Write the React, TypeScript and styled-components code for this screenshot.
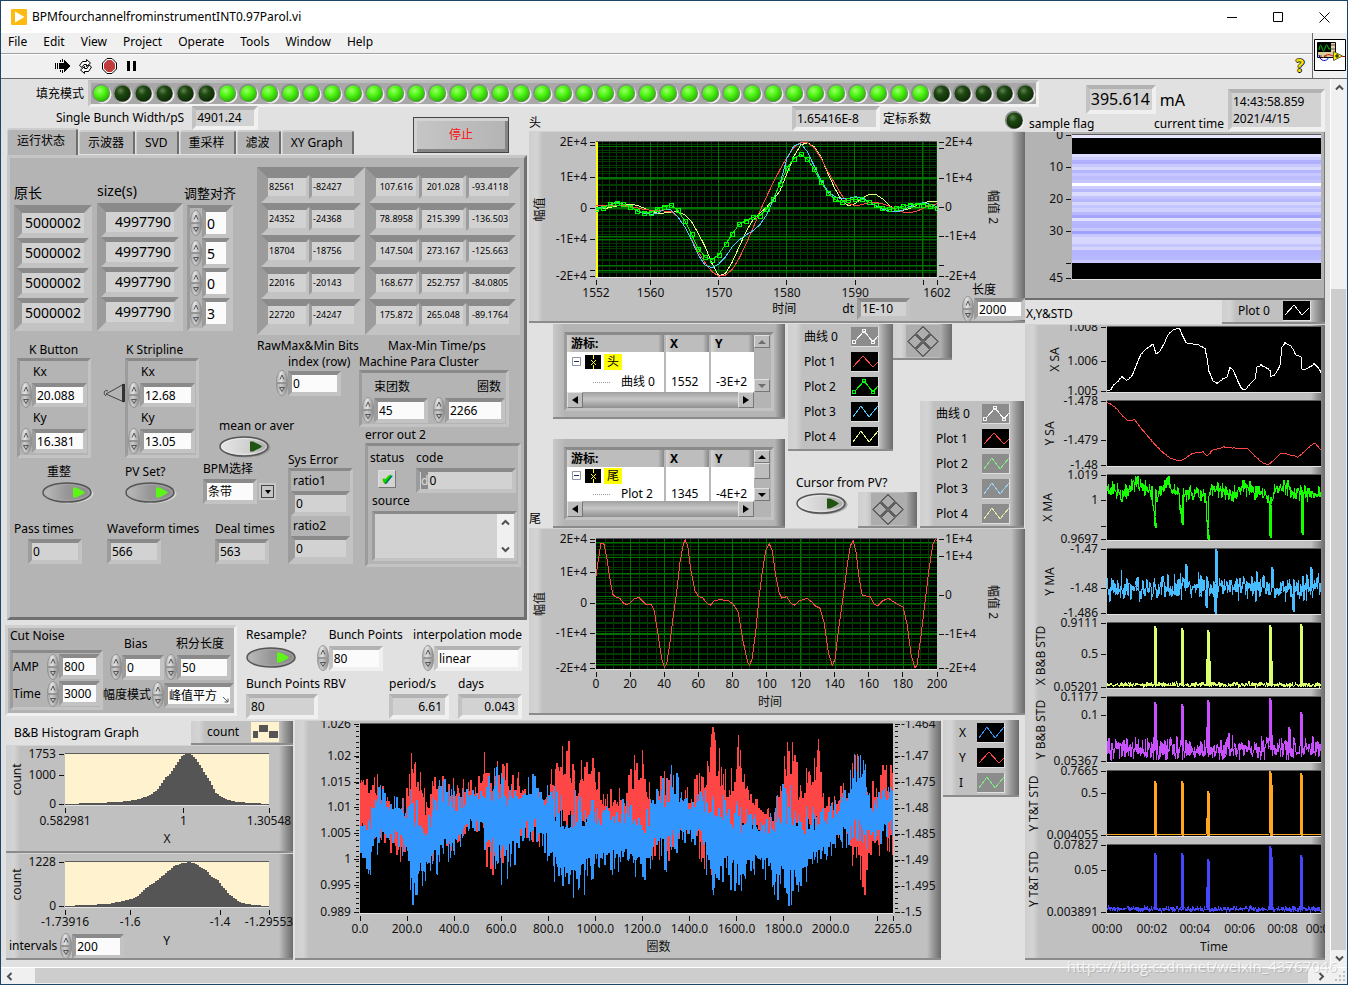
import React from "react";
import styled, { createGlobalStyle, css } from "styled-components";

const Global = createGlobalStyle`
  *, *::before, *::after { box-sizing: border-box; }
  body {
    margin: 0;
    background: #e1e1e1;
    color: #000;
    font: 12px/16px "Noto Sans", "Noto Sans CJK SC", sans-serif;
    overflow-x: hidden;
  }
  button, input, select, textarea { font: inherit; color: inherit; margin: 0; border-radius: 0; }
  button { padding: 0; border: 0; background: none; }
  svg { display: block; }
  svg text { font: 12px "Noto Sans", "Noto Sans CJK SC", sans-serif; fill: #111; }
`;

/* ---------- colours ---------- */

const canvas = "#e1e1e1";
const cluster = "#b4b4b4";
const raised = `linear-gradient(to right, #cfcfcf 0, #d4d4d4 8px, #c0c0c0 14px, #c0c0c0 calc(100% - 14px), #999 calc(100% - 8px), #6c6c6c 100%)`;

const bevels = {
  light: "#b2b2b2 #f0f0f0 #f0f0f0 #c2c2c2",
  dark: "#8a8a8a #c3c3c3 #c3c3c3 #9c9c9c",
};
type Tone = keyof typeof bevels;

/* ---------- window ---------- */

const Window = styled.div`
  position: relative;
  display: flex;
  flex-direction: column;
  min-height: 100vh;
  border: 1px solid #1c4668;
  background: ${canvas};
`;

const TitleBar = styled.header`
  display: flex;
  align-items: center;
  height: 32px;
  padding-left: 10px;
  gap: 5px;
  background: #fff;
`;

const WindowTitle = styled.h1`
  flex: 1;
  margin: 0;
  font-size: 12px;
  font-weight: 400;
`;

const CaptionButtons = styled.div`
  display: flex;
`;

const CaptionButton = styled.button`
  width: 46px;
  height: 30px;
  display: grid;
  place-items: center;
`;

const Bars = styled.div`
  display: flex;
  background: #f0f0f0;
`;

const BarColumn = styled.div`
  flex: 1;
`;

const MenuBar = styled.nav`
  display: flex;
  height: 21px;
  padding: 0 0 3px 7px;
  gap: 16px;
  border-bottom: 1px solid #a0a0a0;
`;

const MenuItem = styled.button`
  line-height: 16px;
`;

const ToolBar = styled.div`
  display: flex;
  align-items: center;
  height: 25px;
  padding: 0 8px 1px 54px;
  gap: 7px;
  border-top: 1px solid #fff;
  border-bottom: 1px solid #6a6a6a;
`;

const HelpButton = styled.button`
  margin-left: auto;
  font: bold 17px/20px "Open Sans", sans-serif;
  color: #f5e400;
  text-shadow: 1px 0 #000, -1px 0 #555, 0 1px #000, 0 -1px #555;
`;

const IconPane = styled.div`
  width: 35px;
  padding: 6px 1px 0;
  border-left: 1px solid #6a6a6a;
  border-bottom: 1px solid #6a6a6a;
`;

const Viewport = styled.div`
  display: flex;
  flex: 1;
`;

const Canvas = styled.main`
  flex: 1;
  min-width: 0;
  display: grid;
  grid-template-columns: minmax(1000px, 1fr) 305px;
  align-items: start;
  padding-bottom: 6px;
`;

/* ---------- scrollbars ---------- */

const VScroll = styled.div`
  display: flex;
  flex-direction: column;
  width: 17px;
  border-left: 1px solid #fff;
  background: #f0f0f0;
`;

const VThumb = styled.div`
  flex: 1;
  margin: 193px 1px 0 0;
  background: #cdcdcd;
`;

const HScroll = styled.div`
  display: flex;
  height: 17px;
  border-top: 1px solid #fff;
  background: #f0f0f0;
`;

const HThumb = styled.div`
  flex: 1;
  margin: 0 5px 1px 17px;
  background: #cdcdcd;
`;

const ArrowButton = styled.button`
  width: 17px;
  height: 17px;
  display: grid;
  place-items: center;
`;

const SizeGrip = styled.div`
  width: 17px;
  display: grid;
  place-items: center end;
  padding-right: 2px;
`;

/* ---------- controls ---------- */

const boxStyle = css<{ $w: number; $h?: number; $tone?: Tone; $size?: number; $b?: number; $right?: boolean }>`
  display: block;
  width: ${(p) => p.$w}px;
  height: ${(p) => p.$h ?? 25}px;
  padding: 0 ${(p) => (p.$right ? 3 : 1)}px;
  border: ${(p) => p.$b ?? 4}px solid;
  border-color: ${(p) => bevels[p.$tone ?? "dark"]};
  font-size: ${(p) => p.$size ?? 12}px;
  line-height: ${(p) => (p.$h ?? 25) - 2 * (p.$b ?? 4)}px;
  text-align: ${(p) => (p.$right ? "right" : "left")};
  white-space: nowrap;
  outline: 0;
`;

const Readout = styled.output`
  ${boxStyle}
  background: #d2d2d2;
`;

const Entry = styled.input`
  ${boxStyle}
  background: #fbfbfb;
`;

const Choice = styled.select`
  ${boxStyle}
  background: #fbfbfb;
  appearance: none;
`;

const RadixMark = styled.span`
  display: inline-block;
  margin-right: 1px;
  background: #8a8a8a;
  color: #ddd;
`;

const SpinBox = styled.span`
  display: flex;
  flex-direction: column;
  width: 12px;
  flex: none;
`;

const NumericRow = styled.span`
  display: flex;
  align-items: center;
`;

const Caption = styled.span<{ $indent?: number }>`
  display: block;
  padding-left: ${(p) => p.$indent ?? 0}px;
  white-space: nowrap;
`;

const ItemBox = styled.label<{ $indent?: number; $gap?: number; $end?: boolean }>`
  display: flex;
  flex-direction: column;
  align-items: ${(p) => (p.$end ? "flex-end" : "flex-start")};
  gap: ${(p) => p.$gap ?? 2}px;
  padding-left: ${(p) => p.$indent ?? 0}px;
`;

const Inset = styled.span<{ $by: number }>`
  display: block;
  padding-left: ${(p) => p.$by}px;
`;

const Cluster = styled.div<{ $w?: number; $b?: number; $tone?: Tone }>`
  width: ${(p) => (p.$w ? `${p.$w}px` : "auto")};
  border: ${(p) => p.$b ?? 3}px solid;
  border-color: ${(p) => bevels[p.$tone ?? "dark"]};
  background: ${cluster};
`;

const ToggleButton = styled.button`
  display: block;
  width: 52px;
  height: 22px;
`;

function Spin() {
  return (
    <SpinBox>
      {[0, 1].map((i) => (
        <button key={i} type="button" aria-label={i ? "Decrease" : "Increase"}>
          <svg width="12" height="13" viewBox="0 0 12 13">
            <defs>
              <linearGradient id="spinUp" x2="1"><stop offset="0" stopColor="#b0b0b0" /><stop offset=".4" stopColor="#e4e4e4" /><stop offset="1" stopColor="#8c8c8c" /></linearGradient>
              <linearGradient id="spinDown" x2="1"><stop offset="0" stopColor="#8c8c8c" /><stop offset=".6" stopColor="#cccccc" /><stop offset="1" stopColor="#a8a8a8" /></linearGradient>
            </defs>
            <g transform={i ? "rotate(180 6 6.500)" : undefined}>
              <path d="M.5 12.500C.5 5.500 3 .5 6 .5s5.500 5 5.500 12z" fill={i ? "url(#spinDown)" : "url(#spinUp)"} stroke="#8a8a8a" strokeWidth=".8" />
            </g>
            {i === 0 ? (
              <path d="M4 9.500L6 5l2 4.500" fill="none" stroke="#555" />
            ) : (
              <path d="M3.500 4.500h5L6 8.500z" fill="none" stroke="#555" />
            )}
          </svg>
        </button>
      ))}
    </SpinBox>
  );
}

type NumericProps = { value: string; w: number; h?: number; tone?: Tone; size?: number; name?: string };

function Numeric({ value, w, h, tone, size, name }: NumericProps) {
  return (
    <NumericRow>
      <Spin />
      <Entry $w={w} $h={h} $tone={tone} $size={size} defaultValue={value} aria-label={name} />
    </NumericRow>
  );
}

type ItemProps = {
  caption: string;
  indent?: number;
  capIndent?: number;
  gap?: number;
  end?: boolean;
  children: React.ReactNode;
};

function Item({ caption, indent, capIndent, gap, end, children }: ItemProps) {
  return (
    <ItemBox $indent={indent} $gap={gap} $end={end}>
      <Caption $indent={capIndent}>{caption}</Caption>
      {children}
    </ItemBox>
  );
}

function Toggle({ on, name }: { on?: boolean; name: string }) {
  return (
    <ToggleButton type="button" role="switch" aria-checked={!!on} aria-label={name}>
      <svg width="52" height="22" viewBox="0 0 52 22">
        <defs>
          <linearGradient id="tgOn" x2="1"><stop offset="0" stopColor="#bdbdbd" /><stop offset=".5" stopColor="#969696" /><stop offset="1" stopColor="#8c8c8c" /></linearGradient>
          <linearGradient id="tgOff" x2="1"><stop offset="0" stopColor="#e6e6e6" /><stop offset=".6" stopColor="#cfcfcf" /><stop offset="1" stopColor="#a6a6a6" /></linearGradient>
        </defs>
        <ellipse cx="26.500" cy="11.500" rx="25" ry="10" fill={on ? "#e2e2e2" : "#8f8f8f"} opacity=".7" />
        <ellipse cx="25" cy="10.500" rx="24" ry="9.500" fill={on ? "url(#tgOn)" : "url(#tgOff)"} stroke="#555" strokeWidth="1.500" />
        <ellipse cx="25" cy="10.500" rx="22" ry="7.800" fill="none" stroke={on ? "#aaa" : "#eee"} opacity=".7" />
        <path d="M31 5.500h3c4 2 7 3 9 5-2 2-5 3-9 5h-3z" fill={on ? "#5cf516" : "#215312"} />
      </svg>
    </ToggleButton>
  );
}

function Led({ on }: { on: boolean }) {
  return (
    <svg width="21" height="21" viewBox="0 0 21 21">
      <defs>
        <radialGradient id="ledOn" cx=".38" cy=".32" r=".7"><stop offset="0" stopColor="#9cff6a" /><stop offset=".45" stopColor="#4df713" /><stop offset="1" stopColor="#2fae0a" /></radialGradient>
        <radialGradient id="ledOff" cx=".38" cy=".32" r=".7"><stop offset="0" stopColor="#5f8350" /><stop offset=".4" stopColor="#1d4710" /><stop offset="1" stopColor="#0f2b08" /></radialGradient>
      </defs>
      <circle cx="11.500" cy="11.500" r="9" fill="#f0f0f0" />
      <circle cx="10" cy="10" r="9.200" fill="#8b8b8b" />
      <circle cx="10.500" cy="10.500" r="8" fill={on ? "url(#ledOn)" : "url(#ledOff)"} />
    </svg>
  );
}

/* ---------- charts ---------- */

type Tick = [number, string?];

const ChartPanel = styled.section<{ $top: number; $h?: number }>`
  min-height: ${(p) => (p.$h ? `${p.$h}px` : "auto")};
  padding-top: ${(p) => p.$top}px;
  border-top: 1px solid #d2d2d2;
  border-bottom: 2px solid #8b8b8b;
  background: ${raised};
  overflow: hidden;
`;

const PlotGrid = styled.div<{ $l: number; $r: number }>`
  display: grid;
  grid-template-columns: ${(p) => p.$l}px minmax(0, 1fr) ${(p) => p.$r}px;
`;

const PlotSvg = styled.svg<{ $h: number; $bg: string }>`
  width: 100%;
  height: ${(p) => p.$h}px;
  background: ${(p) => p.$bg};
  border-top: 1px solid #5c5c5c;
  border-bottom: 1px solid #e4e4e4;
  shape-rendering: crispEdges;
  path, polyline, line { vector-effect: non-scaling-stroke; }
`;

const AxisSvg = styled.svg`
  overflow: visible;
  shape-rendering: crispEdges;
`;

function Plot({ w, h, bg = "#000", children }: { w: number; h: number; bg?: string; children: React.ReactNode }) {
  return (
    <PlotSvg $h={h} $bg={bg} viewBox={`0 0 ${w} ${h - 2}`} preserveAspectRatio="none">
      {children}
    </PlotSvg>
  );
}

type YAxisProps = {
  width: number;
  height: number;
  ticks: Tick[];
  minor?: number[];
  right?: boolean;
  title?: string;
  titleX?: number;
  titleY?: number;
};

function YAxis({ width, height, ticks, minor = [], right, title, titleX = 11, titleY }: YAxisProps) {
  const ty = titleY ?? height / 2;
  const from = right ? 2 : width - 6;
  const to = right ? 7 : width - 1;
  return (
    <AxisSvg width={width} height={height}>
      {minor.map((y, i) => (
        <line key={i} x1={right ? 2 : width - 4} x2={right ? 5 : width - 1} y1={y} y2={y} stroke="#111" />
      ))}
      {ticks.map(([y, label], i) => (
        <React.Fragment key={i}>
          <line x1={from} x2={to} y1={y + 0.5} y2={y + 0.5} stroke="#111" />
          {label && (
            <text x={right ? 8 : width - 9} y={y + 4} textAnchor={right ? "start" : "end"}>{label}</text>
          )}
        </React.Fragment>
      ))}
      {title && (
        <text textAnchor="middle" transform={`translate(${titleX} ${ty}) rotate(${right ? 90 : -90})`} y={4}>{title}</text>
      )}
    </AxisSvg>
  );
}

type XAxisProps = { height: number; ticks: Tick[]; title?: string; titleX?: string; labelY?: number; marks?: boolean };

function XAxis({ height, ticks, title, titleX = "50%", labelY = 20, marks = true }: XAxisProps) {
  return (
    <AxisSvg width="100%" height={height}>
      {ticks.map(([x, label], i) => (
        <React.Fragment key={i}>
          {marks && <line x1={`${x}%`} x2={`${x}%`} y1={2} y2={7} stroke="#111" />}
          {label && <text x={`${x}%`} y={labelY} textAnchor="middle">{label}</text>}
        </React.Fragment>
      ))}
      {title && <text x={titleX} y={labelY + 18} textAnchor="middle">{title}</text>}
    </AxisSvg>
  );
}

function random(seed: number) {
  let s = seed;
  return () => {
    s = (s + 0x6d2b79f5) | 0;
    let t = Math.imul(s ^ (s >>> 15), 1 | s);
    t = (t + Math.imul(t ^ (t >>> 7), 61 | t)) ^ t;
    return ((t ^ (t >>> 14)) >>> 0) / 4294967296;
  };
}

function at(points: number[][], x: number) {
  for (let i = 1; i < points.length; i++) {
    if (x <= points[i][0]) {
      const [x0, y0] = points[i - 1];
      const [x1, y1] = points[i];
      return y0 + ((y1 - y0) * (x - x0)) / (x1 - x0);
    }
  }
  return points[points.length - 1][1];
}

const pairs = (flat: number[]) => {
  const out: number[][] = [];
  for (let i = 0; i < flat.length; i += 2) out.push([flat[i], flat[i + 1]]);
  return out;
};

const line = (points: number[][]) => points.map((p) => p.join(",")).join(" ");

function GreenGrid({ w, h, vMajor, vMinor, hMajor, hMinor }: { w: number; h: number; vMajor: number[]; vMinor: number[]; hMajor: number[]; hMinor: number[] }) {
  return (
    <>
      <path d={vMinor.map((x) => `M${x} 0V${h}`).join("") + hMinor.map((y) => `M0 ${y}H${w}`).join("")} stroke="#003c00" />
      <path d={vMajor.map((x) => `M${x} 0V${h}`).join("") + hMajor.map((y) => `M0 ${y}H${w}`).join("")} stroke="#007200" />
    </>
  );
}

const steps = (from: number, to: number, by: number) => {
  const out: number[] = [];
  for (let v = from; v <= to; v += by) out.push(Math.round(v) + 0.5);
  return out;
};

/* samples 1552 … 1602, in plot rows scaled by three */
const headGreen = [388, 384, 373, 369, 373, 380, 393, 398, 398, 387, 380, 376, 391, 422, 463, 506, 531, 539, 524, 493, 461, 433, 422, 412, 407, 388, 356, 311, 265, 236, 223, 238, 268, 307, 338, 358, 367, 361, 358, 358, 366, 376, 385, 388, 385, 379, 374, 374, 374, 379, 383];
const headYellow = [388, 386, 383, 378, 374, 373, 376, 384, 392, 399, 399, 397, 395, 405, 425, 460, 500, 550, 588, 580, 545, 500, 455, 420, 400, 382, 360, 332, 280, 230, 195, 188, 200, 232, 280, 325, 360, 377, 371, 355, 344, 343, 356, 376, 390, 391, 386, 376, 368, 364, 366];
const headRed = [375, 377, 377, 376, 377, 380, 383, 388, 391, 392, 393, 395, 410, 440, 478, 515, 548, 575, 589, 585, 568, 535, 492, 445, 395, 350, 308, 268, 232, 203, 187, 188, 203, 235, 275, 310, 345, 370, 378, 374, 368, 367, 371, 378, 391, 396, 398, 394, 385, 376, 371];
const headBlue = [385, 382, 374, 367, 372, 381, 392, 400, 403, 400, 388, 390, 410, 440, 480, 525, 555, 564, 552, 530, 500, 480, 465, 452, 435, 405, 360, 310, 235, 198, 190, 215, 258, 300, 335, 350, 356, 355, 350, 355, 365, 378, 387, 393, 396, 390, 380, 372, 368, 373, 380];
const samples = (v: number[]) => v.map((y, i) => [Math.round(i * 68.2) / 10, Math.round(((y - 186) / 3) * 10) / 10]);

function HeadPlot() {
  return (
    <Plot w={341} h={137}>
      <GreenGrid
        w={341} h={137}
        vMajor={[54.5, 122.5, 190.5, 258.5, 326.5]}
        vMinor={steps(6, 341, 6.82)}
        hMinor={[...steps(4, 136, 6.25), ...steps(2, 136, 5.8)]}
        hMajor={[4.5, 36.5, 35.5, 66.5, 65.5, 94.5, 97.5, 123.5, 128.5]}
      />
      <line x1=".5" x2=".5" y1="0" y2="137" stroke="#ffff00" strokeWidth="2" />
      <polyline points={line(samples(headYellow))} fill="none" stroke="#e6ff80" />
      <polyline points={line(samples(headRed))} fill="none" stroke="#ff4646" />
      <polyline points={line(samples(headBlue))} fill="none" stroke="#50c8ff" />
      <polyline points={line(samples(headGreen))} fill="none" stroke="#00ff00" />
      <path
        d={samples(headGreen).map(([x, y]) => `M${Math.round(x) - 1.5} ${Math.round(y) - 1.5}h4v4h-4z`).join("")}
        fill="none" stroke="#00ff00"
      />
    </Plot>
  );
}

const tailCurve = pairs([213,150,222,90,228,52,236,52,245,95,255,160,263,205,270,213,285,218,295,232,306,237,318,230,330,218,342,216,352,225,363,236,380,238,388,255,398,320,410,400,418,425,425,415,435,350,445,270,455,200,465,110,475,55,481,43,488,60,497,130,510,195,520,213,533,216,545,232,556,239,568,225,585,222,610,225,625,236,640,260,655,350,668,410,674,418,681,400,692,320,702,215,712,140,722,75,733,55,742,75,752,150,762,200,770,217,785,213,797,232,808,239,822,226,845,218,860,228,870,240,885,248,897,290,910,380,922,420,930,400,942,300,955,210,968,110,976,60,985,46,993,80,1003,160,1012,210,1035,212,1047,235,1058,240,1072,226,1090,218,1108,230,1135,245,1147,300,1158,385,1170,428,1176,418,1188,330,1200,230,1212,130,1224,55,1231,42,1235,45])
  .map(([x, y]) => [Math.round(((x - 213) / 3) * 10) / 10, Math.round(((y - 40) / 3) * 10) / 10]);

function TailPlot() {
  return (
    <Plot w={341} h={132}>
      <GreenGrid
        w={341} h={132}
        vMajor={steps(34, 340, 34.1)}
        vMinor={steps(8.5, 340, 8.525)}
        hMinor={[...steps(4, 131, 6.1), ...steps(7, 131, 7.7)]}
        hMajor={[3.5, 18.5, 34.5, 57.5, 64.5, 94.5, 95.5, 125.5]}
      />
      <polyline points={line(tailCurve)} fill="none" stroke="#ff4646" />
    </Plot>
  );
}

const redTop = pairs([0,38,10,44,20,52,32,74,45,70,49,24,54,18,61,30,66,72,75,50,79,38,93,42,107,58,117,50,130,8,137,32,154,42,165,56,182,55,195,36,200,22,208,15,215,47,230,10,235,32,245,65,265,58,270,32,282,17,290,62,302,40,308,30,318,60,332,62,342,27,353,0,362,27,368,58,378,10,387,48,398,70,412,82,422,27,432,7,438,50,450,40,458,10,462,58,472,72,485,50,498,17,505,30,515,62,522,40,533,38]);
const redBottom = pairs([0,130,20,120,50,150,75,140,95,135,110,100,122,120,130,174,137,165,148,120,160,115,180,125,200,110,220,130,240,130,255,120,280,152,295,145,310,140,330,115,345,150,352,164,362,135,380,135,400,115,425,140,450,120,465,140,480,110,495,155,505,189,512,150,525,120,533,150]);
const blueTop = pairs([0,80,10,80,15,48,30,68,45,72,51,60,60,72,66,92,79,50,100,66,120,52,133,36,150,45,165,45,180,55,200,65,215,65,235,72,250,78,270,70,285,82,300,55,313,38,325,68,345,62,358,55,375,75,390,85,410,85,425,52,440,76,460,85,475,72,488,50,491,40,493,0,495,30,503,20,510,70,525,62,533,50]);
const blueBottom = pairs([0,152,8,160,15,140,20,130,35,120,45,140,52,190,60,165,70,160,80,150,100,130,110,105,125,128,135,165,150,158,160,130,170,116,180,120,190,145,198,182,213,184,225,170,240,155,260,150,275,156,282,168,295,135,305,150,325,120,340,125,352,178,365,165,378,170,400,150,410,165,425,191,432,184,442,178,450,155,470,135,490,122,505,125,515,125,533,115]);

function bars(top: number[][], bottom: number[][], seed: number) {
  const r = random(seed);
  let d = "";
  let from = 0;
  let to = 0;
  for (let x = 0; x < 533; x++) {
    const a = at(top, x);
    const b = at(bottom, x);
    const reach = (b - a) * 0.34;
    if (x % 2 === 0 || r() > 0.5) {
      from = Math.round(a + (1 - Math.pow(r(), 1.6)) * reach);
      to = Math.round(b - (1 - Math.pow(r(), 1.6)) * reach);
    }
    d += `M${x} ${from}h1V${to}h-1z`;
  }
  return d;
}

const bunchRed = bars(redTop, redBottom, 11);
const bunchBlue = bars(blueTop, blueBottom, 29);

/* strip charts: 214 columns each */
const sa1 = pairs([0,65,3,65,6,59,11,54,15,50,20,53,25,49,29,39,34,27,39,22,46,17,49,27,53,24,57,17,61,8,66,3,72,1,75,7,79,16,89,17,98,21,100,31,102,44,106,54,110,56,116,52,120,50,123,41,126,43,130,52,134,61,138,63,143,57,148,52,150,40,154,38,159,41,163,43,164,50,169,46,173,39,175,20,178,16,184,19,189,28,194,30,195,42,200,42,207,37,211,40,214,45]);
const sa2 = pairs([0,1,8,6,13,12,20,19,28,19,34,27,44,39,54,50,63,57,73,60,79,57,86,52,96,51,100,55,106,49,116,46,129,47,141,48,146,53,153,60,160,64,166,60,174,52,181,53,191,56,196,52,203,45,208,42,214,49]);

function trace(base: number[][], noise: number, seed: number, spikes: number[][] = [], limit = 66) {
  const r = random(seed);
  const out: number[][] = [];
  const step = noise > 1 ? 0.5 : 1;
  for (let x = 0; x <= 214; x += step) {
    const n = (r() + r() + r() - 1.5) / 1.5;
    for (const [sx, sy] of spikes) {
      if (x === sx) {
        out.push([x, sy], [x, at(base, x)], [x + 1, at(base, x)], [x + 1, sy + 2]);
      }
    }
    out.push([x, Math.max(1, Math.min(limit - 3, Math.round((at(base, x) + n * noise) * 2) / 2))]);
  }
  return line(out);
}

const flat = (y: number) => [[0, y], [214, y]];

type Strip = { name: string; x: number; color: string; h: number; ticks: Tick[]; points: string };

const strips: Strip[] = [
  { name: "X SA", x: 30, color: "#ffffff", h: 67, ticks: [[1, "1.008"], [35, "1.006"], [65, "1.005"]], points: trace(sa1, 0.8, 1) },
  { name: "Y SA", x: 25, color: "#ff4646", h: 67, ticks: [[1, "-1.478"], [40, "-1.479"], [65, "-1.48"]], points: trace(sa2, 0.7, 2) },
  { name: "X MA", x: 23, color: "#14ff00", h: 67, ticks: [[1, "1.019"], [26, "1"], [52], [65, "0.9697"]], points: trace(pairs([0,16,8,13,18,20,30,8,45,15,46,28,48,48,49,20,60,10,72,20,74,40,75,20,90,17,99,22,101,60,102,18,110,13,125,20,140,14,160,18,163,30,165,20,175,12,190,18,214,19]), 12, 3, pairs([48,51,75,48,101,64,163,61,195,58])) },
  { name: "Y MA", x: 25, color: "#46beff", h: 67, ticks: [[1, "-1.47"], [40, "-1.48"], [65, "-1.486"]], points: trace(flat(38), 19, 4, pairs([79,15,99,57,108,63,109,0,165,18,186,61,204,18])) },
  { name: "X B&B STD", x: 16, color: "#dcff6e", h: 67, ticks: [[1, "0.9111"], [32, "0.5"], [65, "0.05201"]], points: trace(flat(62), 4, 5, pairs([48,3,75,5,100,36,101,7,102,36,163,2,164,36,194,1])) },
  { name: "Y B&B STD", x: 16, color: "#c850ff", h: 67, ticks: [[1, "0.1177"], [19, "0.1"], [65, "0.05367"]], points: trace(flat(52), 17, 6, pairs([48,5,75,7,100,30,101,3,163,1,164,36,182,30,194,15])) },
  { name: "Y T&T STD", x: 9, color: "#ffa51e", h: 67, ticks: [[1, "0.7665"], [23, "0.5"], [65, "0.004055"]], points: trace(flat(64), 0, 7, pairs([48,10,75,10,100,47,101,20,163,0,164,12,194,2])) },
  { name: "Y T&T STD", x: 9, color: "#4646ff", h: 70, ticks: [[1, "0.07827"], [26, "0.05"], [68, "0.003891"]], points: trace(flat(64), 4, 8, pairs([48,8,75,8,100,42,101,14,163,1,164,10,194,10]), 70) },
];

const hist1 = pairs([0,51,29,50,53,49,70,47,80,44,87,41,94,35,100,25,104,22,111,12,116,4,121,1,126,1,131,6,138,17,145,28,151,40,160,46,172,49,189,50,204,51]);
const hist2 = pairs([0,45,19,44,43,43,63,39,72,36,80,28,87,23,94,18,101,12,109,5,118,2,124,1,130,2,134,5,141,9,146,15,153,19,158,26,165,34,172,39,178,42,189,44,204,45]);

function histogram(points: number[][], base: number) {
  let d = `M0 ${base}`;
  for (let x = 0; x < 204; x += 2) d += `V${Math.round(at(points, x + 1)) - 1}H${x + 2}`;
  return `${d}V${base}z`;
}

const intensityRows = "dcdcff ccccff b0b0ff c8c8ff d8d8ff b4b4ff c8c8ff bebeff c4c4ff ffffff ccccff b8b8ff dcdcff c2c2ff b8b8ff d6d6ff c4c4ff d0d0ff b8b8ff a4a4ff e2e2ff b8b8ff b6b6ff c8c8ff a0a0ff c8c8ff d8d8ff d6d6ff c6c6ff d4d4ff b4b4ff b4b4ff b8b8ff c8c8ff".split(" ");

/* ---------- legends ---------- */

const LegendPanel = styled.div<{ $w: number }>`
  width: ${(p) => p.$w}px;
  flex: none;
  border-bottom: 2px solid #8b8b8b;
  background: ${raised};
`;

const LegendRow = styled.div`
  display: flex;
  align-items: center;
  justify-content: space-between;
  height: 25px;
  padding: 0 14px 0 16px;
`;

type Mark = { label: string; color: string; on?: boolean; squares?: boolean };

function Swatch({ color, on = true, squares, wide }: { color: string; on?: boolean; squares?: boolean; wide?: boolean }) {
  const path = wide ? "M2 14l9-10 8 10 7-7" : squares ? "M4 14l9-10 9 11 5-6" : color === "#ff4646" ? "M2 15l10-11 10 11 5-5" : "M2 15l8-11 8 11 9-11";
  return (
    <svg width="28" height="20" viewBox="0 0 28 20" shapeRendering="crispEdges">
      <rect width="28" height="20" fill={on ? "#000" : "#8c8c8c"} />
      <path d={path} fill="none" stroke={color} />
      {squares && <path d="M1.500 13.500h3v3h-3zM11.500 2.500h3v3h-3zM20.500 13.500h3v3h-3z" fill="none" stroke={color} />}
      <path d="M0 19.500h27.500V0" fill="none" stroke="#e0e0e0" />
    </svg>
  );
}

function Legend({ marks, w }: { marks: Mark[]; w: number }) {
  return (
    <LegendPanel $w={w}>
      {marks.map((m) => (
        <LegendRow key={m.label}>
          <span>{m.label}</span>
          <Swatch color={m.color} on={m.on} squares={m.squares} />
        </LegendRow>
      ))}
    </LegendPanel>
  );
}

const headMarks: Mark[] = [
  { label: "曲线 0", color: "#f4f4f4", on: false, squares: true },
  { label: "Plot 1", color: "#ff4646" },
  { label: "Plot 2", color: "#00ff00", squares: true },
  { label: "Plot 3", color: "#50c8ff" },
  { label: "Plot 4", color: "#e6ff80" },
];
const tailMarks: Mark[] = [
  { label: "曲线 0", color: "#f4f4f4", on: false, squares: true },
  { label: "Plot 1", color: "#ff4646" },
  { label: "Plot 2", color: "#82e682", on: false },
  { label: "Plot 3", color: "#96d2f0", on: false },
  { label: "Plot 4", color: "#dcebaa", on: false },
];
const bunchMarks: Mark[] = [
  { label: "X", color: "#3296ff" },
  { label: "Y", color: "#ff4646" },
  { label: "I", color: "#82e682", on: false },
];

/* ---------- cursor list ---------- */

const CursorPanel = styled.div`
  width: 232px;
  padding: 8px 11px 6px 11px;
  border-bottom: 2px solid #8b8b8b;
  background: linear-gradient(to right, #c8c8c8 0, #b4b4b4 12px, #b4b4b4 calc(100% - 10px), #6c6c6c 100%);
`;

const CursorFrame = styled.div`
  display: grid;
  grid-template-columns: 187px 16px;
  border: 3px solid;
  border-color: ${bevels.dark};
`;

const CursorView = styled.div<{ $h: number }>`
  height: ${(p) => p.$h}px;
  overflow: hidden;
  background: #fff;
`;

const CursorTable = styled.table`
  width: 187px;
  min-height: 100%;
  table-layout: fixed;
  border-collapse: collapse;
  th {
    height: 17px;
    padding: 0 4px;
    text-align: left;
    line-height: 17px;
    background: linear-gradient(to right, #d4d4d4, #bdbdbd 6px, #bdbdbd calc(100% - 6px), #888);
  }
  td {
    height: 18px;
    padding: 0 0 0 5px;
    line-height: 16px;
    white-space: nowrap;
  }
  th + th, td + td { border-left: 2px solid #b8b8b8; }
`;

const TreeCell = styled.span`
  display: flex;
  align-items: center;
  gap: 3px;
`;

const CursorName = styled.mark`
  padding: 0 3px;
  background: #ff0;
`;

const LeafName = styled.span`
  display: block;
  margin-left: 21px;
  padding-left: 28px;
  background: linear-gradient(to right, #999 50%, transparent 50%) 0 8px / 2px 1px repeat-x, linear-gradient(#fff, #fff);
`;

const LeafText = styled.span`
  display: block;
  margin-left: -10px;
  padding-left: 10px;
  background: #fff;
`;

const ScrollSide = styled.div`
  display: flex;
  flex-direction: column;
  justify-content: space-between;
`;

const ScrollFoot = styled.div`
  display: flex;
  height: 16px;
  background: linear-gradient(#a0a0a0, #c6c6c6 45%, #8f8f8f);
`;

const RaisedButton = styled.button<{ $dim?: boolean }>`
  width: 16px;
  height: 13px;
  display: grid;
  place-items: center;
  border: 1px solid;
  border-color: #e0e0e0 #777 #777 #e0e0e0;
  background: #bdbdbd;
  color: ${(p) => (p.$dim ? "#6e6e6e" : "#000")};
`;

const FootButton = styled(RaisedButton)`
  height: 16px;
`;

const SideThumb = styled.div`
  flex: 1;
  margin-bottom: 9px;
  border: 1px solid;
  border-color: #e0e0e0 #777 #777 #e0e0e0;
  background: #bdbdbd;
`;

const FootSpace = styled.div`
  flex: 1;
`;

function Arrow({ d }: { d: string }) {
  return <svg width="8" height="8" viewBox="0 0 8 8"><path d={d} fill="currentColor" /></svg>;
}

function CursorList({ name, plot, x, y, h, active }: { name: string; plot: string; x: string; y: string; h: number; active?: boolean }) {
  return (
    <CursorPanel>
      <CursorFrame>
        <CursorView $h={h}>
          <CursorTable>
            <colgroup><col width="98" /><col width="45" /><col width="44" /></colgroup>
            <thead>
              <tr><th>游标:</th><th>X</th><th>Y</th></tr>
            </thead>
            <tbody>
              <tr>
                <td>
                  <TreeCell>
                    <svg width="10" height="10"><path d="M.5.5h8v8h-8z" fill="#fff" stroke="#8a96a6" /><path d="M2 4.500h5" stroke="#234" /></svg>
                    <svg width="16" height="14" shapeRendering="crispEdges"><path d="M0 0h16v14H0z" /><path d="M8.500 0v4M8.500 10v4M6 5l5 5M11 5l-5 5" stroke="#ff0" /></svg>
                    <CursorName>{name}</CursorName>
                  </TreeCell>
                </td>
                <td /><td />
              </tr>
              <tr><td><LeafName><LeafText>{plot}</LeafText></LeafName></td><td>{x}</td><td>{y}</td></tr>
            </tbody>
          </CursorTable>
        </CursorView>
        <ScrollSide>
          <RaisedButton type="button" aria-label="Up" $dim={!active}><Arrow d="M0 6h8L4 2z" /></RaisedButton>
          {active && <SideThumb />}
          <RaisedButton type="button" aria-label="Down" $dim={!active}><Arrow d="M0 2h8L4 6z" /></RaisedButton>
        </ScrollSide>
        <ScrollFoot>
          <FootButton type="button" aria-label="Left"><Arrow d="M7 0v8L1 4z" /></FootButton>
          <FootSpace />
          <FootButton type="button" aria-label="Right"><Arrow d="M1 0v8l6-4z" /></FootButton>
        </ScrollFoot>
      </CursorFrame>
    </CursorPanel>
  );
}

const MoverButton = styled.button`
  display: grid;
  place-items: center;
  width: 59px;
  height: 36px;
  flex: none;
  border-bottom: 2px solid #8b8b8b;
  background: ${raised};
  color: #111;
`;

function Mover({ name }: { name: string }) {
  return (
    <MoverButton type="button" aria-label={name}>
      <svg width="34" height="32" viewBox="0 0 34 32">
        <rect width="34" height="32" fill="#adadad" />
        <path d="M17 1.500l7 7-7 7-7-7zM9 9.500l7 7-7 7-7-7zM25 9.500l7 7-7 7-7-7zM17 17.500l7 7-7 7-7-7z" fill="none" stroke="#111" />
      </svg>
    </MoverButton>
  );
}

/* ---------- page areas ---------- */

const Area = styled.div`
  min-width: 0;
`;

const LedRow = styled.div`
  display: flex;
  align-items: center;
  gap: 4px;
  height: 28px;
  padding: 1px 0 0 35px;
  white-space: nowrap;
`;

const LedStrip = styled.div`
  display: flex;
  flex: none;
  border: 3px solid;
  border-color: #bebebe #f2f2f2 #f2f2f2 #c4c4c4;
  background: #a8a8a8;
`;

const Columns = styled.div`
  display: flex;
`;

const LeftColumn = styled.div`
  width: 526px;
  flex: none;
`;

const MidColumn = styled.div`
  flex: 1;
  min-width: 0;
  padding-left: 2px;
`;

const LeftHead = styled.div`
  display: flex;
  justify-content: space-between;
  align-items: flex-end;
  height: 48px;
  padding: 0 18px 0 6px;
`;

const BunchWidth = styled.label`
  display: flex;
  align-items: center;
  gap: 8px;
  height: 22px;
  padding-left: 49px;
`;

const Tabs = styled.div`
  display: flex;
  align-items: flex-end;
  gap: 1px;
  height: 26px;
`;

const Tab = styled.button<{ $active?: boolean }>`
  height: ${(p) => (p.$active ? 27 : 24)}px;
  margin-bottom: ${(p) => (p.$active ? 0 : 1)}px;
  padding: ${(p) => (p.$active ? "0 11px 3px 9px" : "0 9px 0 8px")};
  border: solid;
  border-width: 2px 2px 0 1px;
  border-color: #cdcdcd #6e6e6e #6e6e6e #cdcdcd;
  border-radius: 3px 3px 0 0;
  background: ${cluster};
  white-space: nowrap;
`;

const StopButton = styled.button`
  width: 96px;
  height: 36px;
  margin-bottom: 2px;
  border: 1px solid #444;
  box-shadow: inset 3px 3px 0 #d2d2d2, inset -3px -3px 0 #858585;
  background: linear-gradient(to right, #c6c6c6, #b4b4b4);
  color: #ff0e0e;
`;

const TabPanel = styled.section`
  height: 465px;
  margin-left: 6px;
  padding: 10px 0 0 4px;
  border: 3px solid;
  border-color: #c6c6c6 #707070 #707070 #c6c6c6;
  background: ${cluster};
`;

const UpperRow = styled.div`
  display: flex;
  align-items: flex-end;
  height: 167px;
`;

const ArrayItem = styled.div<{ $w: number }>`
  width: ${(p) => p.$w}px;
  flex: none;
  padding-bottom: 4px;
`;

const ArrayTitle = styled.h2<{ $size: number }>`
  margin: 0;
  font-size: ${(p) => p.$size}px;
  font-weight: 400;
  line-height: 24px;
  white-space: nowrap;
`;

const Matrix = styled.table`
  border-spacing: 0;
  border: 4px solid;
  border-color: ${bevels.dark};
  font-size: 9px;
  tbody { display: block; }
  tr {
    display: flex;
    border: 4px solid;
    border-color: ${bevels.dark};
  }
  td { display: block; padding: 0; }
`;

const LowerRow = styled.div`
  display: flex;
  height: 229px;
`;

const GainGrid = styled.div`
  display: grid;
  grid-template-columns: 84px 105px 54px;
  grid-template-rows: 123px 46px 60px;
  align-items: end;
  flex: none;
`;

const GainCluster = styled(Cluster)`
  padding: 1px 0;
`;

const GainCaption = styled(Caption)`
  line-height: 20px;
`;

const PointerRow = styled.div<{ $indent: number }>`
  display: flex;
  align-items: center;
  padding-left: ${(p) => p.$indent}px;
`;

const PointerMark = styled.svg`
  align-self: flex-start;
  margin-top: 24px;
`;

const BarRow = styled.span`
  display: flex;
  align-items: center;
  gap: 2px;
`;

const DropButton = styled.button`
  display: grid;
  place-items: center;
  width: 17px;
  height: 17px;
  border: 2px solid #c8c8c8;
  outline: 1px solid #444;
  outline-offset: -3px;
  background: #c6c6c6;
`;

const SideStack = styled.div<{ $w: number }>`
  display: flex;
  flex-direction: column;
  justify-content: space-between;
  width: ${(p) => p.$w}px;
  padding-top: 3px;
`;

const RowIndex = styled.label`
  display: flex;
  flex-direction: column;
`;

const ErrorGroup = styled.div<{ $indent: number }>`
  padding-left: ${(p) => p.$indent}px;
`;

const ErrorCluster = styled(Cluster)`
  padding: 4px 2px 3px 2px;
`;

const ErrorTop = styled.div`
  display: flex;
  justify-content: space-between;
`;

const MachineCluster = styled(Cluster)`
  display: flex;
  justify-content: space-between;
  padding: 6px 1px 1px 0;
`;

const StatusTick = styled.input`
  display: grid;
  place-items: center;
  width: 18px;
  height: 18px;
  margin: 2px 0 0 8px;
  appearance: none;
  border: 1px solid;
  border-color: #ddd #777 #777 #ddd;
  background: #d4d4d4;
  &:checked::after {
    content: "✔";
    font: 15px/15px "DejaVu Sans", sans-serif;
    color: #00d800;
    text-shadow: 1px 1px #063;
  }
`;

const SourceBox = styled.div`
  display: flex;
  width: 145px;
  height: 50px;
  border: 3px solid;
  border-color: ${bevels.dark};
  background: #d2d2d2;
`;

const SourceText = styled.textarea`
  flex: 1;
  min-width: 0;
  resize: none;
  border: 0;
  background: none;
`;

const SourceScroll = styled.div`
  display: flex;
  flex-direction: column;
  justify-content: space-between;
  width: 17px;
  background: #f0f0f0;
`;

const SettingsRow = styled.div`
  display: flex;
  padding: 5px 5px 0 4px;
`;

const NoiseCluster = styled(Cluster)`
  display: flex;
  height: 91px;
  border-color: #cfcfcf #f0f0f0 #f0f0f0 #cfcfcf;
  background: #b2b2b2;
`;

const NoiseInner = styled(Cluster)`
  margin: 6px 0 0 2px;
`;

const NoiseRow = styled.label`
  display: flex;
  align-items: center;
  justify-content: space-between;
  height: 27px;
`;

const NoiseSide = styled.div`
  display: flex;
  flex-direction: column;
  justify-content: space-between;
  flex: 1;
  padding: 8px 0 5px;
`;

const NoiseTop = styled.div`
  display: flex;
  justify-content: space-between;
  padding: 0 3px 0 7px;
`;

const ModeRow = styled.label`
  display: flex;
  align-items: center;
  justify-content: space-between;
  white-space: nowrap;
`;

const RingBox = styled.span`
  position: relative;
  display: block;
  svg { position: absolute; right: 5px; bottom: 5px; pointer-events: none; }
`;

const ResampleGroup = styled.div`
  flex: 1;
  display: flex;
  flex-direction: column;
  gap: 5px;
  padding: 2px 0 0 9px;
`;

const ResampleRow = styled.div`
  display: flex;
  justify-content: space-between;
`;

const PeriodPair = styled.div`
  display: flex;
  gap: 9px;
`;

const MidHead = styled.div`
  display: flex;
  align-items: flex-end;
  justify-content: space-between;
  height: 24px;
  white-space: nowrap;
`;

const ScaleGroup = styled.label`
  display: flex;
  align-items: center;
  gap: 3px;
  flex: 1;
  justify-content: flex-end;
  padding-right: 73px;
`;

const HeadFoot = styled.div`
  display: flex;
  justify-content: flex-end;
  align-items: center;
  height: 22px;
`;

const HeadFootTitle = styled.span`
  margin-right: 46px;
`;

const DtField = styled.label`
  display: flex;
  align-items: center;
  gap: 3px;
  margin-right: 52px;
`;

const LengthLabel = styled.span`
  padding: 4px 0 0 35px;
`;

const Tools = styled.div`
  display: grid;
  grid-template-columns: 24px 232px 3px 132px 1fr;
  height: 205px;
`;

const TailTitle = styled.span`
  align-self: end;
  padding-bottom: 1px;
`;

const ToolColumn = styled.div`
  display: flex;
  flex-direction: column;
  justify-content: space-between;
  padding-top: 1px;
`;

const PaletteRow = styled.div`
  display: flex;
  align-items: flex-end;
  justify-content: space-between;
  padding: 0 3px 0 8px;
`;

const CursorToggle = styled.div`
  width: 60px;
  white-space: nowrap;
  margin-bottom: 13px;
`;

const PaletteColumn = styled(ToolColumn)`
  align-items: flex-start;
  margin-left: -27px;
`;

const TailLegendHolder = styled.div`
  padding-left: 27px;
`;

const BottomRow = styled.div`
  display: flex;
  align-items: flex-start;
  gap: 2px;
  padding: 1px 6px 0 5px;
`;

const HistogramColumn = styled.div`
  width: 287px;
  flex: none;
`;

const HistogramHead = styled.div`
  display: flex;
  justify-content: space-between;
  align-items: flex-end;
  height: 25px;
  padding-left: 8px;
  line-height: 24px;
`;

const CountLegend = styled(LegendPanel)`
  display: flex;
  justify-content: space-between;
  align-items: center;
  height: 24px;
  padding: 0 14px 0 16px;
`;

const IntervalsRow = styled.div`
  display: flex;
  align-items: flex-start;
  gap: 39px;
  height: 25px;
  margin-top: 2px;
  padding-left: 3px;
`;

const IntervalsLabel = styled.label`
  display: flex;
  align-items: center;
  gap: 3px;
`;

const BunchPanel = styled(ChartPanel)`
  flex: 1;
  min-width: 0;
`;

const RightColumn = styled.div`
  padding-right: 5px;
`;

const RightHead = styled.div`
  display: flex;
  justify-content: space-between;
  height: 53px;
  padding-left: 4px;
`;

const CurrentBlock = styled.div`
  display: flex;
  flex-direction: column;
  justify-content: space-between;
  align-items: flex-end;
  flex: 1;
  padding-top: 6px;
`;

const CurrentRow = styled.label`
  display: flex;
  align-items: center;
  gap: 4px;
  margin-right: 43px;
  font-size: 16px;
`;

const FlagRow = styled.div`
  display: flex;
  justify-content: space-between;
  width: 100%;
  padding-right: 4px;
`;

const Clock = styled.output`
  width: 97px;
  height: 42px;
  margin-top: 10px;
  padding: 0 1px;
  border: 4px solid;
  border-color: ${bevels.light};
  background: #d2d2d2;
  line-height: 17px;
`;

const IntensityPanel = styled.section`
  height: 168px;
  padding-top: 2px;
  border-right: 1px solid #777;
  border-bottom: 2px solid #6e6e6e;
  background: #b3b3b3;
  overflow: hidden;
`;

const StripHead = styled.div`
  display: flex;
  justify-content: space-between;
  align-items: flex-end;
  height: 24px;
  padding-left: 1px;
  line-height: 20px;
`;

const StripRow = styled.div`
  margin-bottom: 7px;
`;

const Watermark = styled.div`
  position: absolute;
  right: 10px;
  bottom: 8px;
  font: 15px/20px "Open Sans", sans-serif;
  color: rgba(255, 255, 255, 0.75);
  text-shadow: 1px 1px rgba(130, 130, 130, 0.35);
  pointer-events: none;
`;

/* ---------- data ---------- */

const leds = Array.from({ length: 45 }, (_, i) => i === 0 || (i > 5 && i < 40));
const bits = [["82561", "-82427"], ["24352", "-24368"], ["18704", "-18756"], ["22016", "-20143"], ["22720", "-24247"]];
const times = [["107.616", "201.028", "-93.4118"], ["78.8958", "215.399", "-136.503"], ["147.504", "273.167", "-125.663"], ["168.677", "252.757", "-84.0805"], ["175.872", "265.048", "-89.1764"]];
const timeWidths = [46, 47, 46];

const bunchX: Tick[] = [
  ...Array.from({ length: 11 }, (_, i): Tick => [(i * 20000) / 2265, `${i * 200}.0`]),
  [(2200 * 100) / 2265],
  [100, "2265.0"],
];
const bunchMinor = steps(3, 190, 5.2);

function Chevron({ d }: { d: string }) {
  return (
    <svg width="9" height="9" viewBox="0 0 9 9">
      <path d={d} fill="none" stroke="#505050" strokeWidth="2" />
    </svg>
  );
}

const up = "M1 6.500l3.500-3.500L8 6.500";
const down = "M1 2.500l3.500 3.500L8 2.500";
const left = "M6.500 1L3 4.500 6.500 8";
const rightArrow = "M2.500 1L6 4.500 2.500 8";

function GainPair({ x, y }: { x: string; y: string }) {
  return (
    <GainCluster $w={74}>
      <label>
        <GainCaption $indent={13}>Kx</GainCaption>
        <Numeric value={x} w={55} h={24} />
      </label>
      <label>
        <GainCaption $indent={13}>Ky</GainCaption>
        <Numeric value={y} w={55} h={24} />
      </label>
    </GainCluster>
  );
}

function StatusTab() {
  return (
    <TabPanel>
      <UpperRow>
        <ArrayItem $w={83}>
          <ArrayTitle $size={14}>原长</ArrayTitle>
          <Cluster $w={78}>
            {[0, 1, 2, 3].map((i) => <Readout key={i} $w={72} $h={30} $b={5} $size={14} $right>5000002</Readout>)}
          </Cluster>
        </ArrayItem>
        <ArrayItem $w={87}>
          <ArrayTitle $size={14}>size(s)</ArrayTitle>
          <Cluster $w={86} $b={4}>
            {[0, 1, 2, 3].map((i) => <Readout key={i} $w={78} $h={30} $b={5} $size={14} $right>4997790</Readout>)}
          </Cluster>
        </ArrayItem>
        <ArrayItem $w={73}>
          <ArrayTitle $size={13}>调整对齐</ArrayTitle>
          <Inset $by={3}>
            <Cluster $w={46}>
              {["0", "5", "0", "3"].map((v, i) => <Numeric key={i} value={v} w={28} h={30} size={14} name={`调整对齐 ${i}`} />)}
            </Cluster>
          </Inset>
        </ArrayItem>
        <Matrix>
          <tbody>
            {bits.map((row) => (
              <tr key={row[0]}>
                {row.map((v, i) => <td key={v}><Readout $w={i ? 48 : 44} $h={24} $size={9} $b={3}>{v}</Readout></td>)}
              </tr>
            ))}
          </tbody>
        </Matrix>
        <Matrix>
          <tbody>
            {times.map((row) => (
              <tr key={row[0]}>
                {row.map((v, i) => <td key={v}><Readout $w={timeWidths[i]} $h={24} $size={9} $b={3} $right>{v}</Readout></td>)}
              </tr>
            ))}
          </tbody>
        </Matrix>
      </UpperRow>

      <LowerRow>
        <GainGrid>
          <div>
            <Caption $indent={15}>K Button</Caption>
            <PointerRow $indent={3}><GainPair x="20.088" y="16.381" /></PointerRow>
          </div>
          <div>
            <Caption $indent={28}>K Stripline</Caption>
            <PointerRow $indent={5}>
              <PointerMark width="22" height="22" viewBox="0 0 22 22">
                <path d="M3 14c-3-2-2-7 2-5M21 2v18L3 12 21 2" fill="none" stroke="#444" />
                <path d="M20.500 2v18" stroke="#333" strokeWidth="3" />
              </PointerMark>
              <GainPair x="12.68" y="13.05" />
            </PointerRow>
          </div>
          <Item caption="mean or aver" indent={16}><Toggle name="mean or aver" /></Item>
          <Item caption="重整" indent={28} capIndent={5}><Toggle on name="重整" /></Item>
          <Item caption="PV Set?" indent={27}><Toggle on name="PV Set?" /></Item>
          <Item caption="BPM选择">
            <BarRow>
              <Choice $w={54} defaultValue="条带"><option>条带</option></Choice>
              <DropButton type="button" aria-label="Open list"><Arrow d="M1 2h6L4 6z" /></DropButton>
            </BarRow>
          </Item>
          <Item caption="Pass times"><Inset $by={14}><Readout $w={54}>0</Readout></Inset></Item>
          <Item caption="Waveform times" indent={9}><Readout $w={54}>566</Readout></Item>
          <Item caption="Deal times" indent={12}><Readout $w={54}>563</Readout></Item>
        </GainGrid>

        <SideStack $w={102}>
          <RowIndex>
            <Caption>RawMax&amp;Min Bits</Caption>
            <Caption $indent={31}>index (row)</Caption>
            <Inset $by={19}><Numeric value="0" w={53} /></Inset>
          </RowIndex>
          <ErrorGroup $indent={31}>
            <Caption>Sys Error</Caption>
            <Cluster $w={65}>
              <label><GainCaption $indent={2}>ratio1</GainCaption><Readout $w={59}>0</Readout></label>
              <label><GainCaption $indent={2}>ratio2</GainCaption><Readout $w={59}>0</Readout></label>
            </Cluster>
          </ErrorGroup>
        </SideStack>

        <SideStack $w={162}>
          <div>
            <Caption $indent={29}>Max-Min Time/ps</Caption>
            <Caption>Machine Para Cluster</Caption>
            <MachineCluster $w={150}>
              <Item caption="束团数" capIndent={12}><Numeric value="45" w={54} /></Item>
              <Item caption="圈数" capIndent={44}><Numeric value="2266" w={60} /></Item>
            </MachineCluster>
          </div>
          <ErrorGroup $indent={6}>
            <Caption>error out 2</Caption>
            <ErrorCluster $w={156}>
              <ErrorTop>
                <Item caption="status"><StatusTick type="checkbox" defaultChecked /></Item>
                <Item caption="code"><Readout $w={100}><RadixMark>d</RadixMark>0</Readout></Item>
              </ErrorTop>
              <Item caption="source" indent={2}>
                <SourceBox>
                  <SourceText readOnly />
                  <SourceScroll>
                    <ArrowButton type="button" aria-label="Scroll up"><Chevron d={up} /></ArrowButton>
                    <ArrowButton type="button" aria-label="Scroll down"><Chevron d={down} /></ArrowButton>
                  </SourceScroll>
                </SourceBox>
              </Item>
            </ErrorCluster>
          </ErrorGroup>
        </SideStack>
      </LowerRow>
    </TabPanel>
  );
}

function Settings() {
  return (
    <SettingsRow>
      <NoiseCluster $w={232}>
        <div>
          <Caption $indent={2}>Cut Noise</Caption>
          <NoiseInner $w={93}>
            <NoiseRow>AMP<Numeric value="800" w={41} /></NoiseRow>
            <NoiseRow>Time<Numeric value="3000" w={41} /></NoiseRow>
          </NoiseInner>
        </div>
        <NoiseSide>
          <NoiseTop>
            <Item caption="Bias" capIndent={14}><Numeric value="0" w={42} /></Item>
            <Item caption="积分长度" capIndent={11}><Numeric value="50" w={54} /></Item>
          </NoiseTop>
          <ModeRow>
            幅度模式
            <NumericRow>
              <Spin />
              <RingBox>
                <Choice $w={70} defaultValue="峰值平方"><option>峰值平方</option></Choice>
                <svg width="6" height="6"><path d="M0 0l5 5M5 1.500V5H1.500" fill="none" stroke="#555" /></svg>
              </RingBox>
            </NumericRow>
          </ModeRow>
        </NoiseSide>
      </NoiseCluster>
      <ResampleGroup>
        <ResampleRow>
          <Item caption="Resample?" gap={4}><Toggle on name="Resample?" /></Item>
          <Item caption="Bunch Points" capIndent={12}><Numeric value="80" w={54} tone="light" /></Item>
          <Item caption="interpolation mode" end>
            <NumericRow>
              <Spin />
              <Choice $w={88} $tone="light" defaultValue="linear"><option>linear</option></Choice>
            </NumericRow>
          </Item>
        </ResampleRow>
        <ResampleRow>
          <Item caption="Bunch Points RBV"><Readout $w={72} $tone="light">80</Readout></Item>
          <PeriodPair>
            <Item caption="period/s"><Readout $w={60} $tone="light" $right>6.61</Readout></Item>
            <Item caption="days"><Readout $w={64} $tone="light" $right>0.043</Readout></Item>
          </PeriodPair>
        </ResampleRow>
      </ResampleGroup>
    </SettingsRow>
  );
}

export default function App() {
  return (
    <>
      <Global />
      <Window>
        <TitleBar>
          <svg width="16" height="16" viewBox="0 0 16 16"><rect width="16" height="16" rx="1" fill="#fdbb12" /><path d="M4 2.500v11L13.500 8z" fill="#fff" /></svg>
          <WindowTitle>BPMfourchannelfrominstrumentINT0.97Parol.vi</WindowTitle>
          <CaptionButtons>
            <CaptionButton aria-label="Minimize"><svg width="10" height="10"><path d="M0 5.500h10" stroke="#000" /></svg></CaptionButton>
            <CaptionButton aria-label="Maximize"><svg width="10" height="10"><path d="M.5.5h9v9h-9z" fill="none" stroke="#000" /></svg></CaptionButton>
            <CaptionButton aria-label="Close"><svg width="11" height="11"><path d="M.5.5l10 10M10.500.5l-10 10" stroke="#000" /></svg></CaptionButton>
          </CaptionButtons>
        </TitleBar>

        <Bars>
          <BarColumn>
            <MenuBar>
              {["File", "Edit", "View", "Project", "Operate", "Tools", "Window", "Help"].map((m) => <MenuItem key={m} type="button">{m}</MenuItem>)}
            </MenuBar>
            <ToolBar>
              <button type="button" aria-label="Run"><svg width="16" height="14" viewBox="0 0 16 14" shapeRendering="crispEdges"><path d="M4 4h5V1l6 6-6 6v-3H4zM0 4h1v6H0zM2 4h1v6H2zM5 1h1v2H5zM7 0h1v3H7zM5 11h1v2H5zM7 11h1v3H7z" /></svg></button>
              <button type="button" aria-label="Run continuously"><svg width="15" height="15" viewBox="0 0 15 15"><path d="M1.500 6.500l3-4h4V.5l4 3.500-4 3.500v-2h-2.500L4 8.500zM13.500 8l-3 4.500h-4v2L2.500 11l4-3.500v2H9L11 6z" fill="#fff" stroke="#000" /></svg></button>
              <button type="button" aria-label="Abort"><svg width="20" height="16" viewBox="-2 0 20 16"><path d="M5 .5h5l4.500 4.500v6L10 15.500H5L.5 11V5z" fill="#fff" stroke="#000" /><path d="M5.500 2h4l3.500 3.500v5L9.500 14h-4L2 10.500v-5z" fill="#c03c3c" /></svg></button>
              <button type="button" aria-label="Pause"><svg width="10" height="10" viewBox="0 0 10 10"><path d="M0 0h3v10H0zM6 0h3v10H6z" /></svg></button>
              <HelpButton type="button" aria-label="Help">?</HelpButton>
            </ToolBar>
          </BarColumn>
          <IconPane>
            <svg width="32" height="32" viewBox="0 0 32 32">
              <path d="M.5.5h31v31H.5z" fill="#fff" stroke="#000" />
              <path d="M3.500 3.500h18v15h-18z" fill="#d8cf9a" stroke="#000" />
              <path d="M4 4h13v9H4z" />
              <path d="M5 11c1-6 2-6 3-2s2 4 3 0 2-4 3-1 1 3 2 1" fill="none" stroke="#0c0" />
              <path d="M18 5v2M20 5v2M18 9v2M20 9v2M5 17h3M10 17h3" stroke="#644" />
              <path d="M5 16c1 7 8 7 10 2" fill="none" stroke="#00c" />
              <path d="M9 19c3-4 6-4 10-2M28 17.500h3" fill="none" stroke="#d00" />
              <path d="M19.500 12.500v9l9-4.500z" fill="#ffee00" stroke="#664" /><path d="M21 17h4M23 15v4" stroke="#000" />
            </svg>
          </IconPane>
        </Bars>

        <Viewport>
          <Canvas>
            <Area>
              <LedRow>
                填充模式
                <LedStrip>{leds.map((on, i) => <Led key={i} on={on} />)}</LedStrip>
              </LedRow>

              <Columns>
                <LeftColumn>
                  <LeftHead>
                    <div>
                      <BunchWidth>Single Bunch Width/pS<Readout $w={66} $h={24} $tone="light">4901.24</Readout></BunchWidth>
                      <Tabs role="tablist">
                        <Tab role="tab" aria-selected $active>运行状态</Tab>
                        <Tab role="tab">示波器</Tab>
                        <Tab role="tab">SVD</Tab>
                        <Tab role="tab">重采样</Tab>
                        <Tab role="tab">滤波</Tab>
                        <Tab role="tab">XY Graph</Tab>
                      </Tabs>
                    </div>
                    <StopButton type="button">停止</StopButton>
                  </LeftHead>
                  <StatusTab />
                  <Settings />
                </LeftColumn>

                <MidColumn>
                  <MidHead>
                    头
                    <ScaleGroup><Readout $w={88} $tone="light">1.65416E-8</Readout>定标系数</ScaleGroup>
                    <Led on={false} />
                  </MidHead>

                  <ChartPanel $top={9} $h={192}>
                    <PlotGrid $l={67} $r={88}>
                      <YAxis width={67} height={137} title="幅值" titleX={11}
                        ticks={[[1, "2E+4"], [4], [36, "1E+4"], [67, "0"], [98, "-1E+4"], [129], [135, "-2E+4"]]} />
                      <HeadPlot />
                      <YAxis width={88} height={137} right title="幅值 2" titleX={56} titleY={66}
                        ticks={[[1, "2E+4"], [7], [37, "1E+4"], [66, "0"], [95, "-1E+4"], [124], [135, "-2E+4"]]} />
                      <span />
                      <XAxis height={20} labelY={19} ticks={[[0, "1552"], [16, "1560"], [36, "1570"], [56, "1580"], [76, "1590"], [96], [100, "1602"]]} />
                      <LengthLabel>长度</LengthLabel>
                    </PlotGrid>
                    <HeadFoot>
                      <HeadFootTitle>时间</HeadFootTitle>
                      <DtField>dt<Readout $w={53} $h={22}>1E-10</Readout></DtField>
                      <Numeric value="2000" w={51} h={22} name="长度" />
                    </HeadFoot>
                  </ChartPanel>

                  <Tools>
                    <TailTitle>尾</TailTitle>
                    <ToolColumn>
                      <CursorList name="头" plot="曲线 0" x="1552" y="-3E+2" h={57} />
                      <CursorList name="尾" plot="Plot 2" x="1345" y="-4E+2" h={51} active />
                    </ToolColumn>
                    <span />
                    <ToolColumn>
                      <Legend marks={headMarks} w={105} />
                      <PaletteRow>
                        <CursorToggle>
                          <Item caption="Cursor from PV?"><Toggle name="Cursor from PV?" /></Item>
                        </CursorToggle>
                        <Mover name="Move cursor" />
                      </PaletteRow>
                    </ToolColumn>
                    <PaletteColumn>
                      <Mover name="Move head cursor" />
                      <TailLegendHolder><Legend marks={tailMarks} w={104} /></TailLegendHolder>
                    </PaletteColumn>
                  </Tools>

                  <ChartPanel $top={9} $h={187}>
                    <PlotGrid $l={67} $r={88}>
                      <YAxis width={67} height={132} title="幅值" titleX={11}
                        ticks={[[1, "2E+4"], [4], [34, "1E+4"], [65, "0"], [95, "-1E+4"], [125], [130, "-2E+4"]]} />
                      <TailPlot />
                      <YAxis width={88} height={132} right title="幅值 2" titleX={56} titleY={64}
                        ticks={[[1, "1E+4"], [18, "1E+4"], [57, "0"], [96, "-1E+4"], [130, "-2E+4"]]} />
                      <span />
                      <XAxis height={40} labelY={18} titleX="51%" ticks={Array.from({ length: 11 }, (_, i): Tick => [i * 10, `${i * 20}`])} title="时间" />
                    </PlotGrid>
                  </ChartPanel>
                </MidColumn>
              </Columns>

              <BottomRow>
                <HistogramColumn>
                  <HistogramHead>
                    B&amp;B Histogram Graph
                    <CountLegend $w={102}>
                      count
                      <svg width="28" height="20" viewBox="0 0 28 20"><rect width="28" height="20" fill="#fff3cf" /><path d="M2 9h5v7H2zM8 3h9v7H8zM18 9h9v7h-9z" fill="#555" /></svg>
                    </CountLegend>
                  </HistogramHead>
                  <ChartPanel $top={7} $h={108}>
                    <PlotGrid $l={59} $r={24}>
                      <YAxis width={59} height={53} title="count" titleX={11} ticks={[[1, "1753"], [22, "1000"], [51, "0"]]} />
                      <Plot w={204} h={53} bg="#fff3cf"><path d={histogram(hist1, 51)} fill="#555" /></Plot>
                      <span />
                      <span />
                      <XAxis height={44} labelY={19} ticks={[[0, "0.582981"], [58, "1"], [100, "1.30548"]]} title="X" />
                    </PlotGrid>
                  </ChartPanel>
                  <ChartPanel $top={7} $h={107}>
                    <PlotGrid $l={59} $r={24}>
                      <YAxis width={59} height={47} title="count" titleX={11} ticks={[[1, "1228"], [45, "0"]]} />
                      <Plot w={204} h={47} bg="#fff3cf"><path d={histogram(hist2, 45)} fill="#555" /></Plot>
                      <span />
                      <span />
                      <XAxis height={23} labelY={18} ticks={[[0, "-1.73916"], [32, "-1.6"], [76, "-1.4"], [100, "-1.29553"]]} />
                    </PlotGrid>
                    <IntervalsRow>
                      <IntervalsLabel>intervals<Numeric value="200" w={52} /></IntervalsLabel>
                      Y
                    </IntervalsRow>
                  </ChartPanel>
                </HistogramColumn>

                <BunchPanel $top={2} $h={240}>
                  <PlotGrid $l={65} $r={48}>
                    <YAxis width={65} height={191} minor={bunchMinor}
                      ticks={[[1, "1.026"], [33, "1.02"], [59, "1.015"], [84, "1.01"], [110, "1.005"], [136, "1"], [162, "0.995"], [189, "0.989"]]} />
                    <Plot w={533} h={191}>
                      <path d={bunchRed} fill="#ff4646" />
                      <path d={bunchBlue} fill="#3296ff" />
                    </Plot>
                    <YAxis width={48} height={191} right minor={bunchMinor}
                      ticks={[[1, "-1.464"], [33, "-1.47"], [59, "-1.475"], [85, "-1.48"], [111, "-1.485"], [137, "-1.49"], [163, "-1.495"], [189, "-1.5"]]} />
                    <span />
                    <XAxis height={40} labelY={19} ticks={bunchX} title="圈数" titleX="56%" />
                  </PlotGrid>
                </BunchPanel>
                <Legend marks={bunchMarks} w={76} />
              </BottomRow>
            </Area>

            <RightColumn>
              <RightHead>
                <CurrentBlock>
                  <CurrentRow><Readout $w={70} $h={29} $tone="light" $size={16}>395.614</Readout>mA</CurrentRow>
                  <FlagRow><span>sample flag</span><span>current time</span></FlagRow>
                </CurrentBlock>
                <Clock>14:43:58.859<br />2021/4/15</Clock>
              </RightHead>

              <IntensityPanel>
                <PlotGrid $l={47} $r={3}>
                  <YAxis width={47} height={146} ticks={[[1, "0"], [33, "10"], [65, "20"], [97, "30"], [129], [144, "45"]]} />
                  <Plot w={250} h={146}>
                    <rect width="250" height="3" fill="#e8e8ff" />
                    {intensityRows.map((c, i) => (
                      <rect key={i} y={19 + i * 3.2} width="250" height="3.400" fill={`#${c}`} />
                    ))}
                  </Plot>
                </PlotGrid>
              </IntensityPanel>

              <StripHead>
                X,Y&amp;STD
                <CountLegend $w={103}>Plot 0<Swatch color="#ffffff" wide /></CountLegend>
              </StripHead>

              <ChartPanel $top={1} $h={636}>
                {strips.map((s, i) => (
                  <StripRow key={i}>
                    <PlotGrid $l={82} $r={4}>
                      <YAxis width={82} height={s.h} title={s.name} titleX={s.x} ticks={s.ticks} />
                      <Plot w={214} h={s.h}><polyline points={s.points} fill="none" stroke={s.color} /></Plot>
                    </PlotGrid>
                  </StripRow>
                ))}
                <PlotGrid $l={82} $r={4}>
                  <span />
                  <XAxis height={32} labelY={12} title="Time" marks={false} ticks={[[0, "00:00"], [21, "00:02"], [41, "00:04"], [62, "00:06"], [82, "00:08"], [100, "00:09"]]} />
                </PlotGrid>
              </ChartPanel>
            </RightColumn>
          </Canvas>

          <VScroll>
            <ArrowButton type="button" aria-label="Scroll up"><Chevron d={up} /></ArrowButton>
            <VThumb />
            <ArrowButton type="button" aria-label="Scroll down"><Chevron d={down} /></ArrowButton>
          </VScroll>
        </Viewport>

        <HScroll>
          <ArrowButton type="button" aria-label="Scroll left"><Chevron d={left} /></ArrowButton>
          <HThumb />
          <ArrowButton type="button" aria-label="Scroll right"><Chevron d={rightArrow} /></ArrowButton>
          <SizeGrip><svg width="10" height="10"><path d="M8 0h2v2H8zM4 4h2v2H4zM8 4h2v2H8zM0 8h2v2H0zM4 8h2v2H4zM8 8h2v2H8z" fill="#bfbfbf" /></svg></SizeGrip>
        </HScroll>
        <Watermark>https://blog.csdn.net/weixin_43767046</Watermark>
      </Window>
    </>
  );
}
